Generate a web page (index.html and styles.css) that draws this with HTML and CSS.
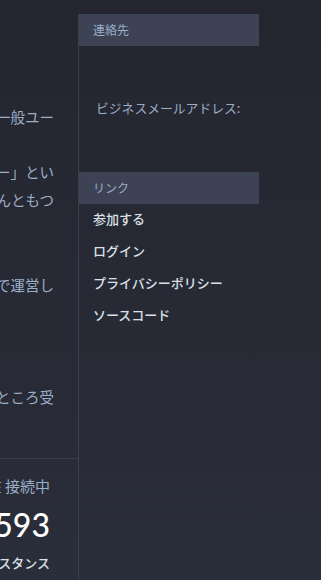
FILE: index.html
```html
<!DOCTYPE html>
<html lang="ja">
<head>
    <meta charset="UTF-8">
    <meta name="viewport" content="width=device-width, initial-scale=1.0">
    <title>サーバーについて</title>
    <link rel="stylesheet" href="styles.css">
</head>
<body>
    <div class="page">
        <aside class="side">
            <div class="about">
                <div class="line l1"><span>このサーバーはどなたでも登録できる一般ユー</span></div>
                <div class="line l2"><span>いわゆる「マストドンユーザー」とい</span></div>
                <div class="line l3"><span>交流を楽しんともつ</span></div>
                <div class="line l4"><span>有志のメンバーによる寄付で運営し</span></div>
                <div class="line l5"><span>ご意見・ご要望は随時いたところ受</span></div>
            </div>
            <div class="stats">
                <div class="stat-label"><span>現在 接続中</span></div>
                <div class="stat-num"><span>1,593</span></div>
                <div class="stat-unit"><span>インスタンス</span></div>
            </div>
        </aside>

        <main class="main">
            <h3 class="panel-head">連絡先</h3>
            <div class="contact">
                <p>ビジネスメールアドレス:</p>
            </div>

            <h3 class="panel-head">リンク</h3>
            <ul class="links">
                <li><a href="#">参加する</a></li>
                <li><a href="#">ログイン</a></li>
                <li><a href="#">プライバシーポリシー</a></li>
                <li><a href="#">ソースコード</a></li>
            </ul>
        </main>
    </div>
</body>
</html>
```

FILE: styles.css
```css
body {
    margin: 0;
    padding: 0;
    background: linear-gradient(#24252f, #2a2e3a);
    color: #d9e1e8;
    font-family: "Noto Sans CJK JP", "Noto Sans", sans-serif;
    height: 580px;
    overflow: hidden;
}
.page {
    display: flex;
    padding-top: 14px;
    height: 566px;
}
.side {
    flex: none;
    width: 78px;
    border-right: 1px solid #3a3f4f;
    display: flex;
    flex-direction: column;
    overflow: hidden;
}
.about {
    flex: 1;
    color: #9baec8;
    font-size: 14.5px;
}
.line {
    display: flex;
    justify-content: flex-end;
    height: 28px;
    line-height: 28px;
    padding-right: 24px;
    white-space: nowrap;
}
.l1 { margin-top: 89px; }
.l2 { margin-top: 27px; }
.l3 { margin-top: 0; }
.l4 { margin-top: 57px; }
.l5 { margin-top: 84px; }
.stats {
    border-top: 1px solid #3a3f4f;
    padding-top: 17px;
    height: 104px;
}
.stats > div {
    display: flex;
    justify-content: flex-end;
    padding-right: 28px;
    white-space: nowrap;
}
.stat-label {
    color: #9baec8;
    font-size: 15px;
    line-height: 20px;
}
.stat-num {
    color: #fff;
    font-family: Lato, "Open Sans", sans-serif;
    font-size: 32px;
    font-weight: 500;
    line-height: 36px;
    margin-top: 11px;
}
.stat-unit {
    font-size: 13px;
    font-weight: 500;
    line-height: 18px;
    margin-top: 11px;
}
.main {
    width: 180px;
}
.panel-head {
    margin: 0;
    height: 32px;
    line-height: 32px;
    padding-left: 14px;
    background: #3d4255;
    color: #9baec8;
    font-size: 12px;
    font-weight: normal;
}
.contact {
    height: 126px;
}
.contact p {
    margin: 0;
    padding: 53px 0 0 17px;
    color: #9baec8;
    font-size: 12.8px;
    line-height: 18px;
    white-space: nowrap;
}
.links {
    list-style: none;
    margin: -2px 0 0;
    padding: 0 0 0 14px;
}
.links li {
    height: 30px;
    line-height: 30px;
    margin-bottom: 2px;
}
.links a {
    color: #d9e1e8;
    text-decoration: none;
    font-size: 13px;
    font-weight: 500;
}
```
